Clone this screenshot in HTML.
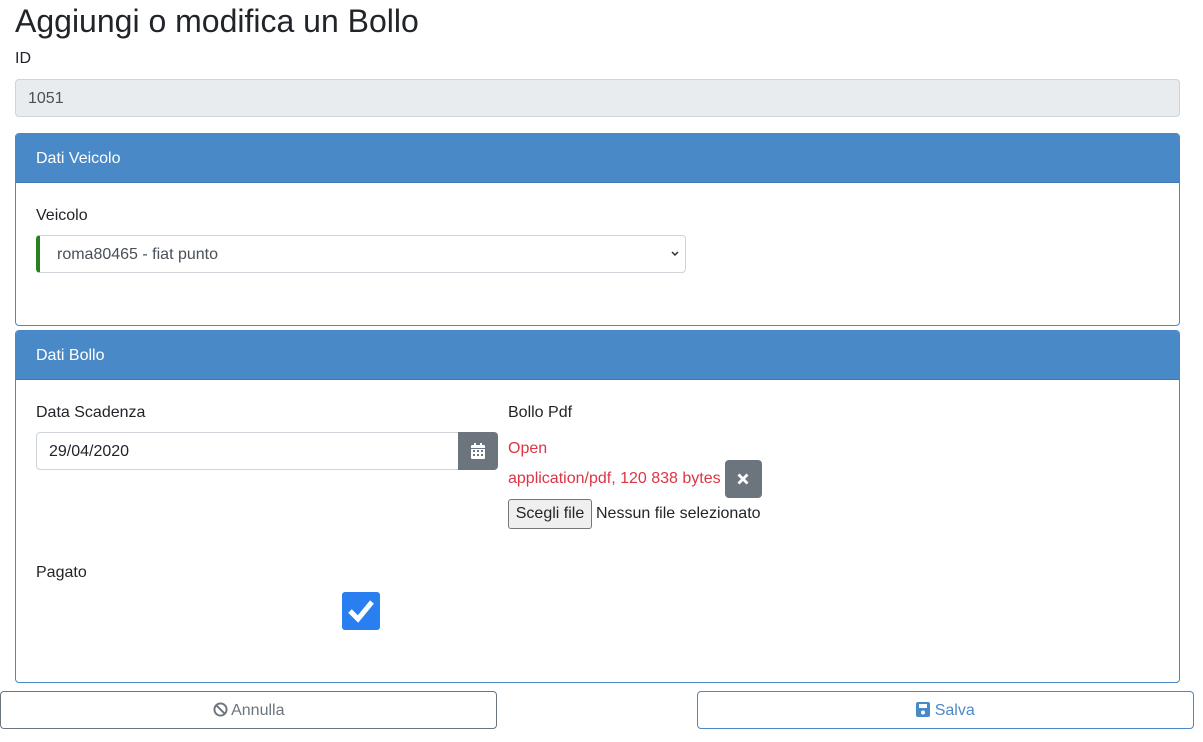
<!DOCTYPE html>
<html><head><style>
*{box-sizing:border-box}
body{margin:0;width:1203px;height:742px;font-family:"Liberation Sans",sans-serif;color:#212529;font-size:16px;background:#fff;position:relative;overflow:hidden}
.a{position:absolute}
h1{position:absolute;left:15px;top:2px;margin:0;font-size:32px;font-weight:400;line-height:38px}
.card{position:absolute;left:15px;width:1165px;border:1px solid #4a89c8;border-radius:4px;overflow:hidden}
.ch{background:#4a89c8;color:#fff;height:49px;line-height:50px;padding-left:20px;font-size:16px;border-bottom:1px solid #3f79b3}
.inp{position:absolute;border:1px solid #ced4da;border-radius:4px;background:#fff;height:38px;line-height:38px;padding-left:12px}
.btn{position:absolute;top:691px;height:38px;width:497px;border:1px solid;border-radius:4px;text-align:center;line-height:38px}
</style></head><body>
<h1>Aggiungi o modifica un Bollo</h1>
<div class="a" style="left:15px;top:50px">ID</div>
<div class="inp" style="left:15px;top:79px;width:1165px;background:#e9ecef;color:#495057">1051</div>

<div class="card" style="top:133px;height:193px">
<div class="ch">Dati Veicolo</div>
<div class="a" style="left:20px;top:73px">Veicolo</div>
<div class="inp" style="left:20px;top:101px;width:650px;border-left:4px solid #28801e;padding-left:17px;color:#495057">roma80465 - fiat punto
<svg class="a" style="right:6px;top:15px" width="8" height="6" viewBox="0 0 8 6"><path d="M1 1l3 3 3-3" stroke="#333" stroke-width="1.5" fill="none"/></svg></div>
</div>

<div class="card" style="top:330px;height:353px">
<div class="ch">Dati Bollo</div>
<div class="a" style="left:20px;top:73px">Data Scadenza</div>
<div class="inp" style="left:20px;top:101px;width:424px;border-radius:4px 0 0 4px">29/04/2020</div>
<div class="a" style="left:442px;top:101px;width:40px;height:38px;background:#6c757d;border-radius:0 4px 4px 0">
<svg class="a" style="left:13px;top:11px" width="14" height="16" viewBox="0 0 14 16"><rect x="0" y="2" width="14" height="14" rx="1" fill="#fff"/><rect x="3" y="0" width="2" height="4" fill="#fff"/><rect x="9" y="0" width="2" height="4" fill="#fff"/><rect x="0" y="5" width="14" height="1" fill="#6c757d"/><g fill="#6c757d"><rect x="2" y="7" width="2" height="2"/><rect x="6" y="7" width="2" height="2"/><rect x="10" y="7" width="2" height="2"/><rect x="2" y="11" width="2" height="2"/><rect x="6" y="11" width="2" height="2"/><rect x="10" y="11" width="2" height="2"/></g></svg></div>
<div class="a" style="left:492px;top:73px">Bollo Pdf</div>
<div class="a" style="left:492px;top:109px;color:#dc3545">Open</div>
<div class="a" style="left:492px;top:139px;color:#dc3545">application/pdf, 120 838 bytes</div>
<div class="a" style="left:709px;top:129px;width:37px;height:38px;background:#6c757d;border-radius:4px">
<svg class="a" style="left:12px;top:13px" width="12" height="12" viewBox="0 0 12 12"><path d="M1.5 1.5l9 9M10.5 1.5l-9 9" stroke="#fff" stroke-width="2.8"/></svg></div>
<div class="a" style="left:492px;top:168px;width:84px;height:30px;background:#efefef;border:1px solid #767676;border-radius:3px;text-align:center;line-height:28px">Scegli file</div>
<div class="a" style="left:580px;top:174px">Nessun file selezionato</div>
<div class="a" style="left:20px;top:233px">Pagato</div>
<div class="a" style="left:326px;top:261px;width:38px;height:38px;background:#2a7ff0;border-radius:3px">
<svg class="a" style="left:5px;top:6px" width="28" height="26" viewBox="0 0 28 26"><path d="M3 13l8 8L25 4" stroke="#fff" stroke-width="5" fill="none"/></svg></div>
</div>

<div class="btn" style="left:0;border-color:#6c757d;color:#6c757d">
<svg style="vertical-align:-2px" width="15" height="15" viewBox="0 0 16 16"><circle cx="8" cy="8" r="6.5" stroke="#6c757d" stroke-width="2" fill="none"/><path d="M3.5 3.5l9 9" stroke="#6c757d" stroke-width="2"/></svg> Annulla</div>
<div class="btn" style="left:697px;border-color:#4a89c8;color:#4a89c8">
<svg style="vertical-align:-2px" width="14" height="15" viewBox="0 0 14 15"><rect x="0" y="0" width="14" height="15" rx="2" fill="#4a89c8"/><rect x="3" y="2" width="8" height="4" fill="#fff"/><circle cx="7" cy="10.5" r="2" fill="#fff"/></svg> Salva</div>
</body></html>
